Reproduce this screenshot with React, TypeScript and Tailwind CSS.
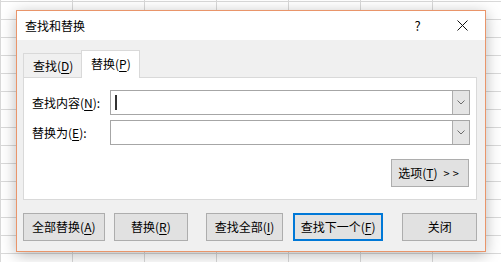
import React from 'react';

const Key: React.FC<{ k: string }> = ({ k }) => <span className="underline underline-offset-[2px]">{k}</span>;

const Combo: React.FC<{ cursor?: boolean }> = ({ cursor }) => (
  <div className="flex h-[25px] w-[360px] border border-[#a6a6a6] bg-white">
    <div className="flex flex-1 items-center pl-[4px]">
      {cursor && <div className="h-[15px] w-[1.5px] bg-[#333]" />}
    </div>
    <div className="flex w-[17px] items-center justify-center border-l border-[#adadad] bg-[#e5e5e5]">
      <svg width="8" height="5" viewBox="0 0 8 5">
        <polyline points="0.5,0.5 4,4 7.5,0.5" fill="none" stroke="#6d6d6d" strokeWidth="1" />
      </svg>
    </div>
  </div>
);

const Btn: React.FC<{ w: string; focused?: boolean; className?: string; children: React.ReactNode }> = ({ w, focused, className, children }) => (
  <div
    className={`flex h-[28px] items-center justify-center bg-[#e1e1e1] ${w} ${
      focused ? 'border-2 border-[#0078d7]' : 'border border-[#adadad]'
    } ${className ?? ''}`}
  >
    {children}
  </div>
);

export default function App() {
  return (
    <div className="relative h-[262px] w-[501px] overflow-hidden bg-white bg-[linear-gradient(to_right,#d9d9d9_1px,transparent_1px),linear-gradient(to_bottom,#d9d9d9_1px,transparent_1px)] bg-[size:72px_18px] bg-[position:0_1px] pt-[10px] pl-[16px] font-['Noto_Sans_CJK_SC',sans-serif] text-[12px] leading-[16px] text-black">
      <div className="flex h-[242px] w-[470px] flex-col border border-[#e9956a] bg-[#f0f0f0] shadow-[0_3px_14px_rgba(0,0,0,0.28)]">
        {/* title bar */}
        <div className="flex h-[29px] items-center bg-white">
          <span className="ml-[8px] flex-1">查找和替换</span>
          <div className="flex h-full w-[45px] items-center justify-center text-[13px]">?</div>
          <div className="flex h-full w-[45px] items-center justify-center">
            <svg width="11" height="11" viewBox="0 0 11 11">
              <path d="M0.5 0.5 L10.5 10.5 M10.5 0.5 L0.5 10.5" stroke="#111" strokeWidth="1" fill="none" />
            </svg>
          </div>
        </div>

        <div className="flex flex-col pt-[10px] pl-[6px] pr-[8px]">
          {/* tabs */}
          <div className="flex h-[27px] items-end">
            <div className="flex h-[24px] w-[58px] items-center border-t border-l border-[#d9d9d9] bg-[#f0f0f0] pl-[9px] pt-[1px]">
              查找(<Key k="D" />)
            </div>
            <div className="relative z-10 -mb-px flex h-[28px] w-[59px] items-center border-t border-l border-r border-[#d9d9d9] bg-white pl-[9px] pb-[2px]">
              替换(<Key k="P" />)
            </div>
          </div>

          {/* panel */}
          <div className="flex h-[123px] w-[454px] flex-col border border-[#d9d9d9] bg-white pt-[12px] pl-[8px] pr-[6px]">
            <div className="flex items-center">
              <span className="w-[78px]">查找内容(<Key k="N" />):</span>
              <Combo cursor />
            </div>
            <div className="mt-[5px] flex items-center">
              <span className="w-[78px]">替换为(<Key k="E" />):</span>
              <Combo />
            </div>
            <div className="mt-[14px] flex justify-end pr-[1px]">
              <Btn w="w-[78px]">
                <span>选项(<Key k="T" />)</span>
                <span className="ml-[6px] text-[11px] tracking-[3px]">&gt;&gt;</span>
              </Btn>
            </div>
          </div>

          {/* buttons */}
          <div className="mt-[13px] flex">
            <Btn w="w-[82px]">全部替换(<Key k="A" />)</Btn>
            <Btn w="w-[75px]" className="ml-[9px]">替换(<Key k="R" />)</Btn>
            <Btn w="w-[77px]" className="ml-[18px]">查找全部(<Key k="I" />)</Btn>
            <Btn w="w-[91px]" focused className="ml-[10px]">查找下一个(<Key k="F" />)</Btn>
            <Btn w="w-[75px]" className="ml-[19px]">关闭</Btn>
          </div>
        </div>
      </div>
    </div>
  );
}
